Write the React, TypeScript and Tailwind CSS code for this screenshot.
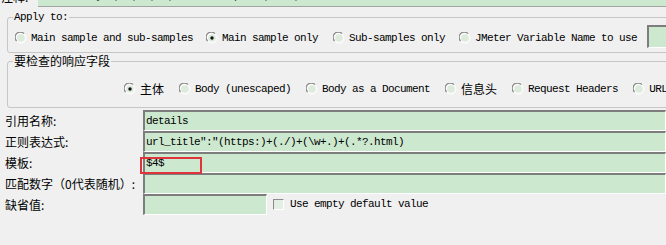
import React from 'react';

// 旧式 Swing 文本框：左上内凹，绿色底
const field =
  'bg-[#cce8cf] border-t-2 border-l-2 border-t-[#7d7d7d] border-l-[#7d7d7d] border-b border-r border-b-white border-r-white';

const cjk = "font-['Noto_Sans_CJK_SC',sans-serif] tracking-normal";

function Radio({ checked }: { checked?: boolean }) {
  return (
    <svg width="12" height="12" viewBox="0 0 12 12" className="shrink-0">
      <circle cx="6" cy="6" r="5.5" fill="#fbfbfb" />
      <path d="M1.6 9 A5 5 0 0 1 9 1.6" stroke="#8c8c8c" strokeWidth="1.3" fill="none" />
      <circle cx="6" cy="6" r="3.8" fill="#dcebdc" />
      {checked && <circle cx="6" cy="6" r="1.7" fill="#111" />}
    </svg>
  );
}

function Option({ label, checked, cn, className = '' }: { label: string; checked?: boolean; cn?: boolean; className?: string }) {
  return (
    <div className={`flex items-center gap-[4px] shrink-0 ${className}`}>
      <Radio checked={checked} />
      <span className={`whitespace-pre leading-[14px] ${cn ? `${cjk} text-[12px]` : ''}`}>{label}</span>
    </div>
  );
}

function Row({ label, children }: { label: string; children: React.ReactNode }) {
  return (
    <div className="flex h-[21px] items-center">
      <div className={`w-[143px] shrink-0 pl-[5px] text-[12px] leading-[14px] ${cjk}`}>{label}</div>
      {children}
    </div>
  );
}

export default function App() {
  return (
    <div className="w-[666px] h-[245px] overflow-hidden bg-[#f0f0f0] font-['Liberation_Mono',monospace] text-[11px] tracking-[-0.6px] text-black">
      {/* 注释 行（被上边裁掉） */}
      <div className="flex h-[21px] -mt-[14px] items-center">
        <div className={`w-[38px] shrink-0 pl-[1px] text-[12px] leading-[14px] ${cjk}`}>注释:</div>
        <div className="flex-1 h-full bg-[#cce8cf] border-b border-b-[#a3a3a3] pl-[4px] flex items-center text-[#333]">
          <span className="whitespace-pre">  _      y  ,  ,  ,  ,          p    ,    ,                  _</span>
        </div>
      </div>

      {/* Apply to */}
      <fieldset className="ml-[7px] mt-[4px] w-[700px] pl-[5px] pt-[2px] pb-[4px] border border-[#c6c6c6] rounded-[3px]">
        <legend className="px-[1px] leading-[12px]">Apply to:</legend>
        <div className="flex h-[23px] items-center">
          <Option className="ml-[2px] mt-[3px]" label="Main sample and sub-samples" />
          <Option className="ml-[13px] mt-[3px]" label="Main sample only" checked />
          <Option className="ml-[15px] mt-[3px]" label="Sub-samples only" />
          <Option className="ml-[14px] mt-[3px]" label="JMeter Variable Name to use" />
          <div className={`ml-[10px] w-[60px] h-full ${field}`} />
        </div>
      </fieldset>

      {/* 要检查的响应字段 */}
      <fieldset className="ml-[7px] mt-[1px] w-[700px] pl-[5px] pt-[14px] pb-[11px] border border-[#c6c6c6] rounded-[3px]">
        <legend className={`px-[1px] text-[12px] leading-[14px] ${cjk}`}>要检查的响应字段</legend>
        <div className="flex h-[14px] items-center gap-[15px] ml-[111px]">
          <Option label="主体" checked cn />
          <Option label="Body (unescaped)" />
          <Option label="Body as a Document" />
          <Option label="信息头" cn />
          <Option label="Request Headers" />
          <Option label="URL" />
        </div>
      </fieldset>

      {/* 提取器字段 */}
      <div className="mt-[2px] flex flex-col">
        <Row label="引用名称:">
          <div className={`flex-1 h-full pl-[1px] flex items-center ${field}`}>details</div>
        </Row>
        <Row label="正则表达式:">
          <div className={`flex-1 h-full pl-[1px] flex items-center whitespace-pre ${field}`}>
            {'url_title":"(https:)+(./)+(\\w+.)+(.*?.html)'}
          </div>
        </Row>
        <Row label="模板:">
          <div className={`relative flex-1 h-full pl-[1px] flex items-center ${field}`}>
            $4$
            <div className="absolute z-10 left-[-5px] top-[3px] w-[62px] h-[17px] border-2 border-solid border-[#e0343c]" />
          </div>
        </Row>
        <Row label="匹配数字（0代表随机）:">
          <div className={`flex-1 h-full ${field}`} />
        </Row>
        <Row label="缺省值:">
          <div className={`w-[124px] h-full ${field}`} />
          <div className="ml-[6px] w-[11px] h-[11px] bg-[#e4efe4] border-t border-l border-t-[#8c8c8c] border-l-[#8c8c8c] border-b border-r border-b-white border-r-white" />
          <span className="ml-[6px] whitespace-pre">Use empty default value</span>
        </Row>
      </div>
    </div>
  );
}
